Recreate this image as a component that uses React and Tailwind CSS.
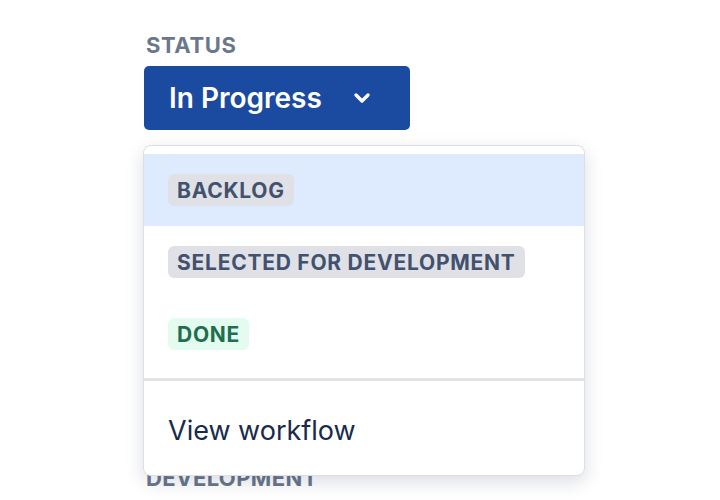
import React from "react";

function Lozenge({ children, tone }) {
  const cls =
    tone === "green"
      ? "bg-[#e3fcef] text-[#216e4e]"
      : "bg-[#dfe1e6] text-[#42526e]";
  return (
    <span
      className={`inline-flex items-center h-[32px] px-[9px] rounded-[6px] text-[21px] font-bold leading-none tracking-[0.75px] ${cls}`}
    >
      {children}
    </span>
  );
}

export default function App() {
  return (
    <div className="relative w-[720px] h-[500px] bg-white overflow-hidden font-['Inter',sans-serif]">
      <div className="pl-[146px] pt-[32px]">
        <div className="text-[22px] font-bold leading-[26px] tracking-[0.6px] text-[#6b778c]">STATUS</div>
        <div className="relative mt-[8px] -ml-[2px]">
          <button className="flex items-center w-[266px] h-[64px] rounded-[5px] bg-[#1b4aa1] pl-[25px] text-white">
            <span className="text-[28px] font-semibold leading-none">In Progress</span>
            <svg
              className="ml-[31px]"
              width="18"
              height="12"
              viewBox="0 0 18 12"
              fill="none"
              stroke="white"
              strokeWidth="3.4"
              strokeLinecap="round"
              strokeLinejoin="round"
            >
              <path d="M3 3l6 6 6-6" />
            </svg>
          </button>
          <div className="absolute left-[-1px] top-[79px] z-10 w-[442px] rounded-[8px] border border-[#dcdfe4] bg-white shadow-[0_6px_18px_rgba(9,30,66,0.15)] py-[8px]">
            <div className="flex items-center h-[72px] pl-[24px] bg-[#deebff]">
              <Lozenge>BACKLOG</Lozenge>
            </div>
            <div className="flex items-center h-[72px] pl-[24px]">
              <Lozenge>SELECTED FOR DEVELOPMENT</Lozenge>
            </div>
            <div className="flex items-center h-[72px] pl-[24px]">
              <Lozenge tone="green">DONE</Lozenge>
            </div>
            <div className="mt-[8px] border-t-[3px] border-[#e1e3e7]" />
            <div className="flex items-center h-[82px] mt-[4px] pt-[8px] pl-[24px] text-[27px] leading-none text-[#172b4d]">
              View workflow
            </div>
          </div>
        </div>
        <div className="mt-[335px] text-[22px] font-bold leading-[26px] tracking-[0.4px] text-[#6b778c]">DEVELOPMENT</div>
      </div>
    </div>
  );
}
